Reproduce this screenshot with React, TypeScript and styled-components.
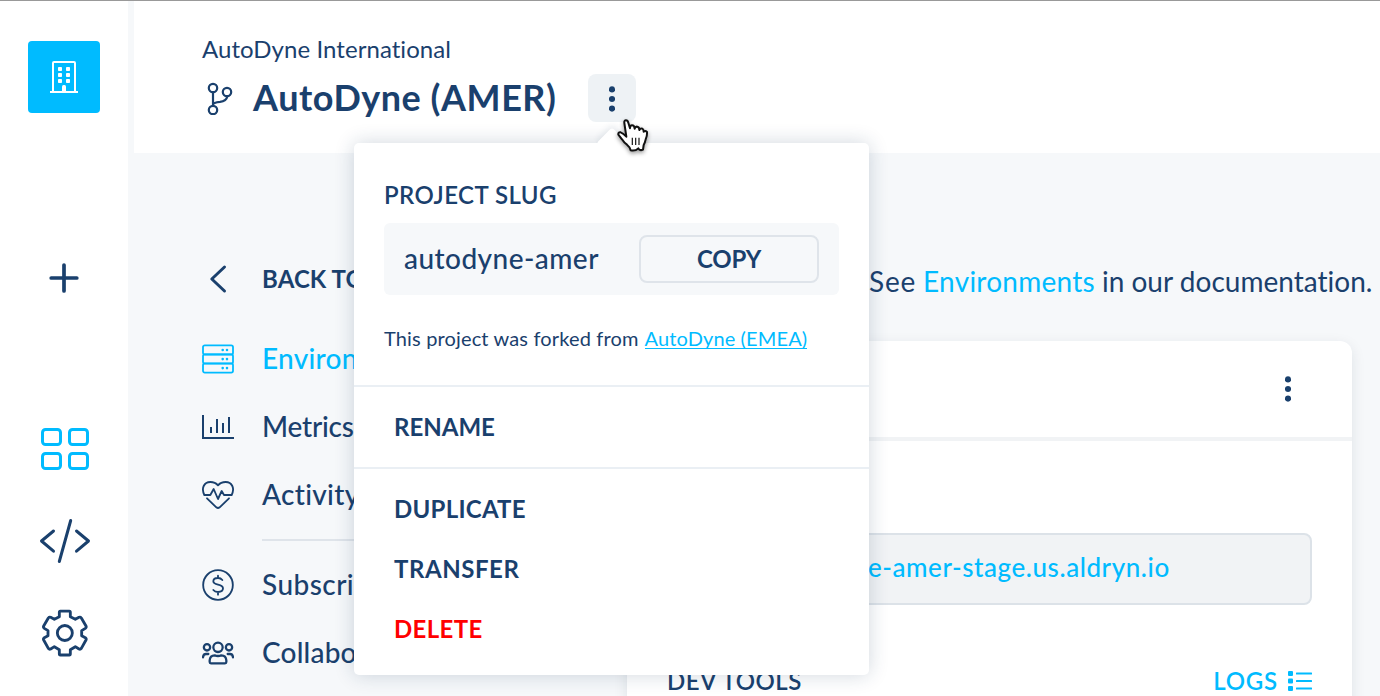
import React from 'react';
import styled, { createGlobalStyle } from 'styled-components';

const navy = '#1a406d';
const cyan = '#00bbff';

const GlobalStyle = createGlobalStyle`
  *, *::before, *::after { box-sizing: border-box; }
  body { margin: 0; overflow: hidden; font-family: Lato, "Open Sans", sans-serif; color: ${navy}; }
  svg { display: block; flex: none; }
`;

const Shell = styled.div`
  position: relative;
  display: flex;
  height: 696px;
  overflow: hidden;
  background: #f6f8fa;
  border-top: 1px solid #999;
`;

const Rail = styled.aside`
  display: flex;
  flex-direction: column;
  align-items: center;
  width: 128px;
  flex: none;
  padding-top: 40px;
  background: #fff;
`;

const Logo = styled.div`
  display: grid;
  place-items: center;
  width: 72px;
  height: 72px;
  border-radius: 4px;
  background: ${cyan};
`;

const RailButton = styled.div<{ $gap: number; $shift?: number }>`
  margin-top: ${p => p.$gap}px;
  padding-left: ${p => p.$shift ?? 0}px;
`;

const Page = styled.div`
  flex: 1;
  min-width: 0;
  display: flex;
  flex-direction: column;
`;

const Header = styled.header`
  height: 152px;
  flex: none;
  margin-left: 6px;
  padding: 33px 0 0 68px;
  background: #fff;
`;

const Label = styled.span<{ $size: number; $weight?: number; $track?: number; $color?: string; $lift?: number }>`
  display: block;
  font-size: ${p => p.$size}px;
  font-weight: ${p => p.$weight ?? 400};
  letter-spacing: ${p => p.$track ?? 0}px;
  color: ${p => p.$color ?? 'inherit'};
  padding-bottom: ${p => p.$lift ?? 0}px;
  line-height: 30px;
  white-space: nowrap;
  font-variant-ligatures: none;
`;

const TitleRow = styled.div`
  display: flex;
  align-items: center;
  height: 48px;
  margin-top: 10px;
`;

const Title = styled.h1`
  width: 335px;
  margin: 0 0 0 17px;
  padding-bottom: 2px;
  font-size: 36px;
  line-height: 44px;
  font-weight: 700;
  letter-spacing: 0.54px;
  white-space: nowrap;
`;

const KebabButton = styled.div`
  display: grid;
  place-items: center;
  width: 48px;
  height: 48px;
  padding-top: 2px;
  border-radius: 8px;
  background: #eef2f5;
`;

const Body = styled.div`
  flex: 1;
  min-height: 0;
  display: flex;
`;

const Nav = styled.nav`
  width: 499px;
  flex: none;
  padding: 92px 0 0 74px;
`;

const NavItem = styled.div<{ $active?: boolean; $spaced?: boolean }>`
  display: flex;
  align-items: center;
  gap: 28px;
  height: 68px;
  margin-bottom: ${p => (p.$spaced ? 12 : 0)}px;
  color: ${p => (p.$active ? cyan : navy)};
`;

const NavRule = styled.div`
  height: 2px;
  margin: 10px 0 10px 60px;
  background: #dfe4ea;
`;

const Content = styled.main`
  flex: 1;
  display: flex;
  flex-direction: column;
`;

const Intro = styled.div`
  display: flex;
  height: 188px;
  flex: none;
  padding: 113px 0 0 242px;
  gap: 7px;
`;

const Card = styled.section`
  width: 725px;
  height: 420px;
  flex: none;
  border-radius: 12px;
  background: #fff;
  box-shadow: 0 4px 14px rgba(20, 40, 60, 0.1);
`;

const CardHead = styled.div`
  display: flex;
  justify-content: flex-end;
  align-items: center;
  height: 100px;
  padding-right: 61px;
  border-bottom: 4px solid #f1f3f5;
`;

const UrlField = styled.div`
  height: 72px;
  margin: 92px 40px 0;
  padding: 17px 0 0 199px;
  border: 2px solid #dce2e8;
  border-radius: 8px;
  background: #f1f3f5;
`;

const ToolsRow = styled.div`
  display: flex;
  align-items: center;
  justify-content: space-between;
  margin: 61px 40px 0;
`;

const Logs = styled.div`
  display: flex;
  align-items: center;
  gap: 10px;
  color: ${cyan};
`;

const Popover = styled.div`
  position: absolute;
  left: 354px;
  top: 142px;
  width: 515px;
  height: 532px;
  border-radius: 5px;
  background: #fff;
  box-shadow: 0 0 20px rgba(24, 55, 90, 0.2);
  &::before {
    content: '';
    position: absolute;
    left: 247px;
    top: -11px;
    width: 22px;
    height: 22px;
    border-radius: 3px;
    transform: rotate(45deg);
    background: #fff;
    box-shadow: -2px -2px 6px rgba(24, 55, 90, 0.09);
    clip-path: polygon(-40% -40%, 100% -40%, 100% 0, 0 100%, -40% 100%);
  }
`;

const SlugSection = styled.div`
  height: 244px;
  padding: 37px 30px 0;
  border-bottom: 2px solid #eaeff4;
`;

const SlugBox = styled.div`
  display: flex;
  align-items: center;
  justify-content: space-between;
  height: 72px;
  margin-top: 13px;
  padding: 0 20px;
  border-radius: 6px;
  background: #f6f8fa;
`;

const CopyButton = styled.div`
  display: flex;
  align-items: center;
  justify-content: center;
  width: 180px;
  height: 48px;
  border: 2px solid #dfe4ea;
  border-radius: 8px;
`;

const ForkLine = styled.div`
  display: flex;
  gap: 6px;
  margin-top: 28px;
`;

const ForkLink = styled.a`
  height: 26px;
  border-bottom: 1px solid ${cyan};
  color: ${cyan};
`;

const MenuGroup = styled.div<{ $ruled?: boolean }>`
  padding: 10px 40px;
  border-bottom: ${p => (p.$ruled ? '2px solid #eaeff4' : 'none')};
`;

const MenuItem = styled.div`
  display: flex;
  align-items: center;
  height: 60px;
`;

const Cursor = styled.svg`
  position: absolute;
  left: 610px;
  top: 109px;
  filter: drop-shadow(0 2px 2px rgba(0, 0, 0, 0.4));
`;

const Dots = () => (
  <svg width="6" height="26" fill={navy}>
    <circle cx="3" cy="3.4" r="3.1" /><circle cx="3" cy="13" r="3.1" /><circle cx="3" cy="22.6" r="3.1" />
  </svg>
);

const line = { fill: 'none', stroke: 'currentColor', strokeLinecap: 'round', strokeLinejoin: 'round' } as const;

const Building = () => (
  <svg width="28" height="32" viewBox="50 61 28 32" fill="#fff">
    <path d="M53 92V63q0-1 1-1h20q1 0 1 1v29" fill="none" stroke="#fff" strokeWidth="2" />
    <path d="M50 91h28v2H50z" />
    {[67, 73, 79].map(y => [58, 66].map(x => <rect key={`${x}-${y}`} x={x} y={y} width="4" height="4" rx=".8" />))}
    <path d="M62 91v-4.500q0-1.500 1.500-1.500h1q1.500 0 1.500 1.500V91z" />
  </svg>
);

const Branch = () => (
  <svg width="34" height="34" viewBox="202 81 34 34" {...line} strokeWidth="2.2">
    <circle cx="213" cy="88" r="4.200" /><circle cx="213" cy="110" r="4.200" /><circle cx="227" cy="92" r="4.200" />
    <path d="M213 92.500v13M227.300 96.500C226.500 100.500 224 101.300 220 101.800C216 102.200 213.500 102.600 213 104.500" />
  </svg>
);

const Chevron = () => (
  <svg width="32" height="32" viewBox="202 263 32 32" {...line} strokeWidth="3">
    <path d="M224.500 267L211.800 279L224.500 291" />
  </svg>
);

const Servers = () => (
  <svg width="32" height="32" {...line} strokeWidth="1.8">
    {[2.3, 11.4, 20.4].map(y => (
      <g key={y}>
        <rect x="1" y={y} width="30" height="9.200" rx="1.800" />
        <path d="M20.700 4.700h0M25 4.700h0" transform={`translate(0 ${y})`} strokeWidth="2.600" />
      </g>
    ))}
  </svg>
);

const Bars = () => (
  <svg width="32" height="32" fill="none" stroke="currentColor" strokeWidth="2">
    <path d="M1 4V27H32M9 22V16M15 22V8M21 22V12M27 22V6" />
  </svg>
);

const Heart = () => (
  <svg width="32" height="32" viewBox="0 0 96 96" {...line} strokeWidth="5.5">
    <path d="M7 48C-3 28 6 9 25 9C36 9 43 13 48 19C53 13 60 9 71 9C90 9 99 28 89 48H66L59 36L48 60L35 30L25 48Z" />
    <path d="M15 58L43 85Q48 89 53 85L81 58" />
  </svg>
);

const Dollar = () => (
  <svg width="32" height="32" viewBox="0 0 96 96" {...line} strokeWidth="5.500">
    <circle cx="48" cy="48" r="44.500" />
    <path d="M61 33C57 28 53 27 48 27C40 27 34 31 34 37C34 51 63 43 63 58C63 65 56 69 48 69C42 69 37 67 34 63M48 20v7M48 69v8" />
  </svg>
);

const People = () => (
  <svg width="32" height="32" viewBox="0 0 96 96" {...line} strokeWidth="6.8">
    <circle cx="48" cy="31" r="14" /><circle cx="15" cy="31" r="9.500" /><circle cx="81" cy="31" r="9.500" />
    <path d="M27 79Q23 79 23 75V70Q24 55 38 55Q48 59 58 55Q72 55 73 70V75Q73 79 69 79Z" />
    <path d="M3 61Q4 51 12 51H19M93 61Q92 51 84 51H77" />
  </svg>
);

const Gear = () => (
  <svg width="48" height="50" viewBox="33 24 144 150" {...line} strokeWidth="8.500">
    <path d="M91 33.500H118Q121 33.500 121 37V50L136 58L147 52Q151 50 154 54L168 78Q170 82 166 85L155 92V107L166 113Q170 116 168 120L154 145Q151 149 147 147L136 140L121 149V161Q121 165 118 165H91Q88 165 88 161V149L73 140L62 147Q58 149 55 145L41 120Q39 116 43 113L54 107V92L43 85Q39 82 41 78L55 54Q58 50 62 52L73 58L88 50V37Q88 33.500 91 33.500Z" />
    <circle cx="104.500" cy="99" r="22.500" />
  </svg>
);

export default function App() {
  return (
    <Shell>
      <GlobalStyle />
      <Rail>
        <Logo><Building /></Logo>
        <RailButton $gap={149}>
          <svg width="32" height="32" {...line} strokeWidth="3.700"><path d="M3.200 16H28.800M16 3V29" /></svg>
        </RailButton>
        <RailButton $gap={133} $shift={2}>
          <svg width="50" height="44" fill="none" stroke={cyan} strokeWidth="3">
            {[2.5, 26.5].map(y => [2.5, 29.5].map(x => <rect key={`${x}-${y}`} x={x} y={y} width="18" height="15" rx="3" />))}
          </svg>
        </RailButton>
        <RailButton $gap={47} $shift={2}>
          <svg width="52" height="46" {...line} strokeWidth="3"><path d="M14.500 13L2.500 23L14.500 33.200M31.700 2.500L20.300 43.500M37.500 13L49.500 23L37.500 33.200" /></svg>
        </RailButton>
        <RailButton $gap={44} $shift={2}><Gear /></RailButton>
      </Rail>

      <Page>
        <Header>
          <Label $size={24} $track={0.06}>AutoDyne International</Label>
          <TitleRow>
            <Branch />
            <Title>AutoDyne (AMER)</Title>
            <KebabButton><Dots /></KebabButton>
          </TitleRow>
        </Header>

        <Body>
          <Nav>
            <NavItem $spaced><Chevron /><Label $size={24} $weight={700} $track={0.1}>BACK TO</Label></NavItem>
            <NavItem $active><Servers /><Label $size={28} $weight={500} $track={0.25} $lift={3}>Environments</Label></NavItem>
            <NavItem><Bars /><Label $size={28} $weight={500} $track={-0.2} $lift={3}>Metrics</Label></NavItem>
            <NavItem><Heart /><Label $size={28} $weight={500} $track={0.3} $lift={3}>Activity</Label></NavItem>
            <NavRule />
            <NavItem><Dollar /><Label $size={28} $weight={500} $track={0.45} $lift={3}>Subscriptions</Label></NavItem>
            <NavItem><People /><Label $size={28} $weight={500} $track={0.2} $lift={3}>Collaborators</Label></NavItem>
          </Nav>

          <Content>
            <Intro>
              <Label $size={28} $track={0.8}>See</Label>
              <Label $size={28} $track={0.25} $color={cyan}>Environments</Label>
              <Label $size={28} $track={0.02}>in our documentation.</Label>
            </Intro>
            <Card>
              <CardHead><Dots /></CardHead>
              <UrlField><Label $size={26} $weight={500} $track={0.55} $color={cyan}>e-amer-stage.us.aldryn.io</Label></UrlField>
              <ToolsRow>
                <Label $size={24} $weight={600} $track={0.45}>DEV TOOLS</Label>
                <Logs>
                  <Label $size={24} $weight={600} $track={0.8}>LOGS</Label>
                  <svg width="24" height="20" fill="currentColor">
                    {[0, 7.5, 15].map(y => (
                      <g key={y}>
                        <rect y={y} width="5" height="5" rx="1" />
                        <rect x="8" y={y + 1.5} width="16" height="2" rx=".5" />
                      </g>
                    ))}
                  </svg>
                </Logs>
              </ToolsRow>
            </Card>
          </Content>
        </Body>
      </Page>

      <Popover>
        <SlugSection>
          <Label $size={24} $weight={600} $track={0.45}>PROJECT SLUG</Label>
          <SlugBox>
            <Label $size={28} $weight={500} $track={0.45} $lift={2}>autodyne-amer</Label>
            <CopyButton><Label $size={24} $weight={700} $track={-0.2}>COPY</Label></CopyButton>
          </SlugBox>
          <ForkLine>
            <Label $size={20} $track={0.15}>This project was forked from</Label>
            <ForkLink><Label $size={20} $track={0.13}>AutoDyne (EMEA)</Label></ForkLink>
          </ForkLine>
        </SlugSection>
        <MenuGroup $ruled>
          <MenuItem><Label $size={24} $weight={700}>RENAME</Label></MenuItem>
        </MenuGroup>
        <MenuGroup>
          <MenuItem><Label $size={24} $weight={700} $track={0.25}>DUPLICATE</Label></MenuItem>
          <MenuItem><Label $size={24} $weight={700} $track={0.55}>TRANSFER</Label></MenuItem>
          <MenuItem><Label $size={24} $weight={700} $track={0.35} $color="#ff0000">DELETE</Label></MenuItem>
        </MenuGroup>
      </Popover>

      <Cursor width="42" height="46" viewBox="0 0 126 138">
        <path
          d="M49 80L43 39Q42 31 48 31Q53 31 55 38L60 55Q60 46 66 46Q73 46 74 56Q76 49 82 50Q88 51 88 60Q91 54 97 56Q101 58 101 65Q106 61 111 66Q112 76 107 88Q105 98 101 105L99 119Q89 123 85 115Q76 124 62 121Q60 111 51 104Q42 98 36 88L25 74Q24 66 32 67Q40 70 49 80Z"
          fill="#fff" stroke="#111" strokeWidth="6" strokeLinejoin="round"
        />
        <path d="M67 83V105M77 83V105M87 83V105" stroke="#222" strokeWidth="3.800" />
      </Cursor>
    </Shell>
  );
}
